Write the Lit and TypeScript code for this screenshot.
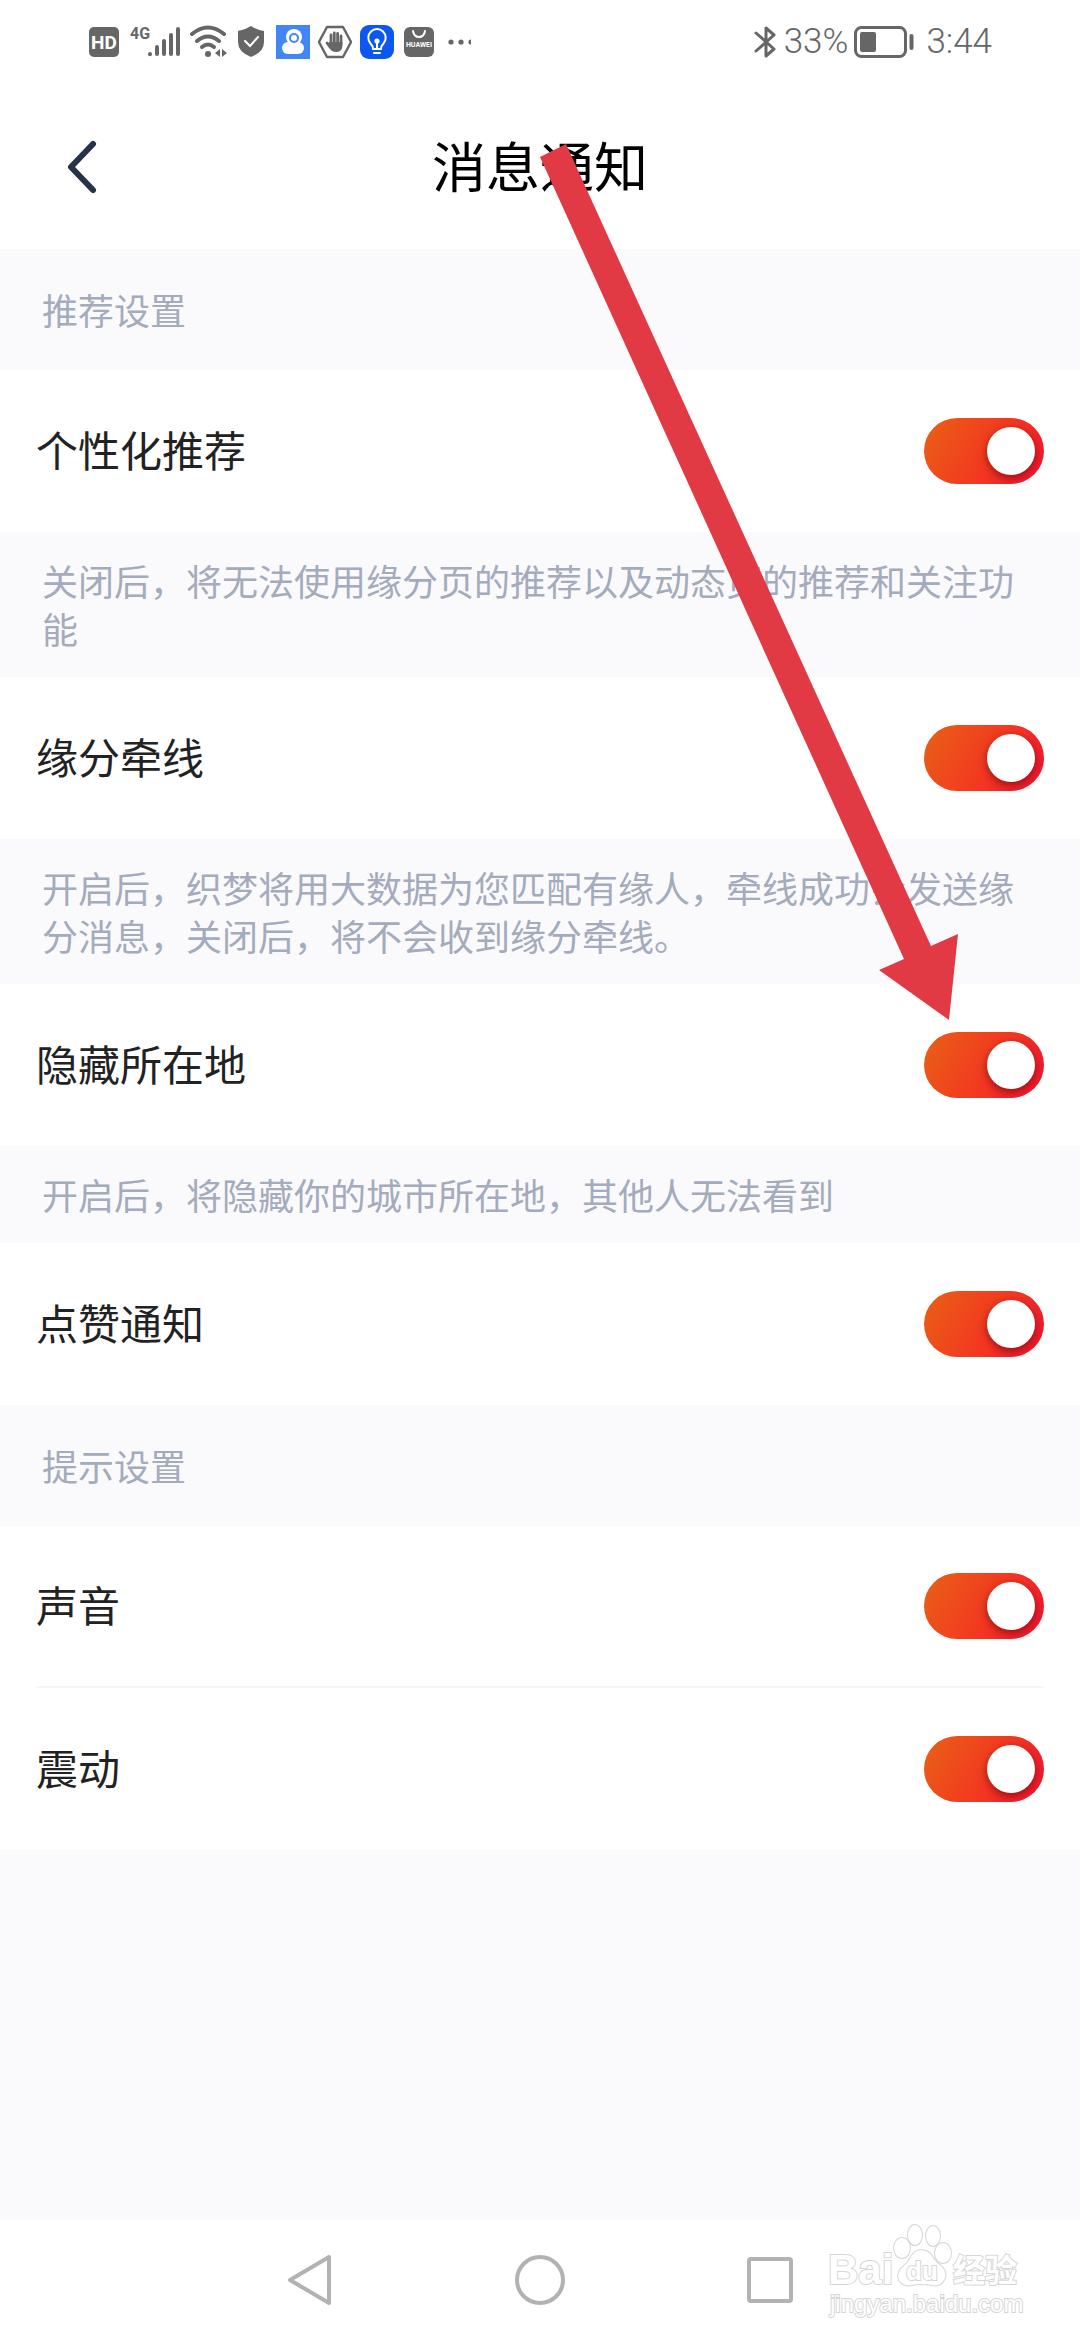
import { LitElement, html, css, svg } from "lit";
import { customElement, property, state } from "lit/decorators.js";

interface Setting {
  id: string;
  label: string;
  note?: string;
}

interface Group {
  title: string;
  items: Setting[];
}

const GROUPS: Group[] = [
  {
    title: "推荐设置",
    items: [
      { id: "personal", label: "个性化推荐", note: "关闭后，将无法使用缘分页的推荐以及动态页的推荐和关注功能" },
      { id: "match", label: "缘分牵线", note: "开启后，织梦将用大数据为您匹配有缘人，牵线成功会发送缘分消息，关闭后，将不会收到缘分牵线。" },
      { id: "location", label: "隐藏所在地", note: "开启后，将隐藏你的城市所在地，其他人无法看到" },
      { id: "likes", label: "点赞通知" },
    ],
  },
  {
    title: "提示设置",
    items: [
      { id: "sound", label: "声音" },
      { id: "vibrate", label: "震动" },
    ],
  },
];

@customElement("status-bar")
export class StatusBar extends LitElement {
  static styles = css`
    :host {
      display: block;
      background: #fff;
      color: #666;
    }
    .bar {
      display: flex;
      align-items: center;
      justify-content: space-between;
      height: 84px;
      box-sizing: border-box;
      padding: 0 88px;
      font: 300 35px/40px Roboto, "Noto Sans", sans-serif;
    }
    .icons {
      display: flex;
      align-items: center;
      gap: 8px;
    }
    .status {
      display: flex;
      align-items: center;
      gap: 6px;
    }
    svg {
      display: block;
      flex: none;
    }
    .glyph {
      font-family: Roboto, "Liberation Sans", sans-serif;
      font-weight: 700;
    }
  `;

  render() {
    return html`
      <div class="bar">
        <div class="icons">
          <svg width="34" height="36" viewBox="0 0 34 36" aria-hidden="true">
            <rect x="1" y="3" width="30" height="30" rx="5" fill="#666" />
            <text class="glyph" x="16" y="25" font-size="19" text-anchor="middle" fill="#fff">HD</text>
          </svg>
          <svg width="52" height="36" viewBox="0 0 52 36" aria-hidden="true">
            <text class="glyph" x="0" y="15" font-size="16" fill="#666">4G</text>
            <g stroke="#666" stroke-width="4" stroke-linecap="round">
              <path d="M20 30V30.2M27 23V30M34 17V30M41 11V30M48 5V30" />
            </g>
          </svg>
          <svg width="38" height="36" viewBox="0 0 38 36" aria-hidden="true">
            <g fill="none" stroke="#666" stroke-width="4" stroke-linecap="round">
              <path d="M2 10Q18-3 34 10" />
              <path d="M7 17Q18 8 29 17" />
              <path d="M12 23Q18 18 24 23" />
            </g>
            <circle cx="18" cy="30" r="3" fill="#666" />
            <path d="M30 25V33L25 29ZM32 25V33L37 29Z" fill="#666" />
          </svg>
          <svg width="32" height="36" viewBox="0 0 32 36" aria-hidden="true">
            <path d="M15 2Q21 6 28 7V18Q28 28 15 33Q2 28 2 18V7Q9 6 15 2Z" fill="#666" />
            <path d="M9 17L14 22L22 13" fill="none" stroke="#fff" stroke-width="2" stroke-linecap="round" />
          </svg>
          <svg width="34" height="36" viewBox="0 0 34 36" aria-hidden="true">
            <rect y="1" width="34" height="34" fill="#4285f4" />
            <circle cx="18" cy="13" r="8" fill="#fff" />
            <rect x="6" y="18" width="22" height="12" rx="6" fill="#fff" />
            <circle cx="18" cy="14" r="5" fill="#4285f4" />
            <circle cx="18" cy="14" r="3" fill="#fff" />
          </svg>
          <svg width="34" height="36" viewBox="0 0 34 36" aria-hidden="true">
            <path d="M9 3H25L33 18L25 33H9L1 18Z" fill="none" stroke="#666" stroke-width="2.4" stroke-linejoin="round" />
            <g stroke="#666" stroke-width="2.8" stroke-linecap="round">
              <path d="M13 20V11M16.3 20V9M19.6 20V9.5M23 20V12M12 23L9 19" />
            </g>
            <path d="M11.6 18H24.4V22Q24 28 18 28Q14 28 12 25L9 20Z" fill="#666" />
          </svg>
          <svg width="34" height="36" viewBox="0 0 34 36" aria-hidden="true">
            <rect y="1" width="34" height="34" rx="9" fill="#0b57f0" />
            <g fill="none" stroke="#fff" stroke-width="2" stroke-linecap="round">
              <path d="M13 25Q13 22 10.5 19.5A8.7 8.7 0 1 1 23.5 19.5Q21 22 21 25ZM14 29H20M17 18V25" />
            </g>
            <circle cx="17" cy="17" r="2.6" fill="#fff" />
          </svg>
          <svg width="34" height="36" viewBox="0 0 34 36" aria-hidden="true">
            <rect x="2" y="3" width="30" height="30" rx="6" fill="#666" />
            <path d="M11 7Q12 13 17 13Q22 13 23 7" fill="none" stroke="#fff" stroke-width="2" stroke-linecap="round" />
            <text class="glyph" x="17" y="23" font-size="7" text-anchor="middle" fill="#fff">HUAWEI</text>
          </svg>
          <svg width="32" height="36" viewBox="0 0 32 36" aria-hidden="true">
            <g fill="#666">
              <circle cx="7" cy="18" r="2.6" />
              <circle cx="17" cy="18" r="2.6" />
              <path d="M27 15.4V20.6A2.6 2.6 0 0 1 27 15.4Z" />
            </g>
          </svg>
        </div>
        <div class="status">
          <svg width="24" height="36" viewBox="0 0 24 36" aria-hidden="true">
            <path d="M2 9L20 25L12 32V4L20 11L2 27" fill="none" stroke="#666" stroke-width="3" stroke-linecap="round" stroke-linejoin="round" />
          </svg>
          <span>33%</span>
          <svg width="66" height="36" viewBox="0 0 66 36" aria-hidden="true">
            <rect x="1.5" y="3.5" width="50" height="29" rx="6" fill="none" stroke="#666" stroke-width="3" />
            <rect x="6" y="8" width="16" height="20" rx="2" fill="#666" />
            <path d="M57.5 12V24" stroke="#666" stroke-width="4" stroke-linecap="round" />
          </svg>
          <span>3:44</span>
        </div>
      </div>
    `;
  }
}

@customElement("setting-row")
export class SettingRow extends LitElement {
  @property() label = "";
  @property({ type: Boolean }) divided = false;
  @state() private on = true;

  static styles = css`
    :host {
      display: block;
      background: #fff;
      padding: 0 36px;
    }
    .row {
      display: flex;
      align-items: center;
      justify-content: space-between;
      height: 162px;
      box-sizing: border-box;
      color: #222;
      font-size: 42px;
      line-height: 60px;
    }
    .row label {
      padding-bottom: 4px;
    }
    .divided {
      border-bottom: 2px solid #f5f5f5;
    }
    .switch {
      appearance: none;
      display: flex;
      flex: none;
      width: 120px;
      height: 66px;
      margin: 0;
      padding: 9px;
      box-sizing: border-box;
      border-radius: 33px;
      background: #d5d7de;
    }
    .switch::before {
      content: "";
      width: 48px;
      height: 48px;
      border-radius: 50%;
      background: #fff;
      box-shadow: 0 3px 8px rgba(90, 0, 0, 0.6);
    }
    .switch:checked {
      justify-content: flex-end;
      background: linear-gradient(120deg, #ea5a17 10%, #f43522 60%, #f01a2e 90%);
    }
  `;

  private toggle(e: Event) {
    this.on = (e.target as HTMLInputElement).checked;
  }

  render() {
    return html`
      <div class="row ${this.divided ? "divided" : ""}">
        <label for="switch">${this.label}</label>
        <input id="switch" class="switch" type="checkbox" role="switch" .checked=${this.on} @change=${this.toggle} />
      </div>
    `;
  }
}

@customElement("nav-bar")
export class NavBar extends LitElement {
  static styles = css`
    :host {
      display: block;
      position: relative;
      background: #fff;
    }
    .nav {
      display: flex;
      height: 120px;
      padding: 0 18%;
    }
    .key {
      flex: 1;
      display: flex;
      align-items: center;
      justify-content: center;
      padding: 0;
      border: 0;
      background: none;
    }
    .mark {
      position: absolute;
      right: 54px;
      bottom: 16px;
      display: block;
    }
    .brand {
      font-family: "Liberation Sans", Arial, sans-serif;
      font-weight: 700;
    }
    .brand-cjk {
      font-family: "Noto Sans CJK SC", sans-serif;
      font-weight: 700;
    }
    .site {
      font-family: "Liberation Sans", Arial, sans-serif;
    }
  `;

  render() {
    return html`
      <nav class="nav">
        <button class="key" aria-label="返回">
          <svg width="52" height="52" viewBox="0 0 52 52" fill="none" stroke="#b2b2b2" stroke-width="4" stroke-linejoin="round">
            <path d="M45 3V49L6 26Z" />
          </svg>
        </button>
        <button class="key" aria-label="主页">
          <svg width="52" height="52" viewBox="0 0 52 52" fill="none" stroke="#b2b2b2" stroke-width="4">
            <circle cx="26" cy="26" r="23" />
          </svg>
        </button>
        <button class="key" aria-label="最近任务">
          <svg width="52" height="52" viewBox="0 0 52 52" fill="none" stroke="#b2b2b2" stroke-width="4">
            <rect x="5" y="5" width="42" height="42" rx="2" />
          </svg>
        </button>
      </nav>
      <svg class="mark" width="200" height="102" viewBox="0 0 200 102" fill="#fff" stroke="#d6d6d6" stroke-width="2" paint-order="stroke">
        <text class="brand" x="2" y="62" font-size="42">Bai</text>
        <ellipse cx="76" cy="26" rx="8" ry="10" />
        <ellipse cx="89" cy="13" rx="7" ry="10" />
        <ellipse cx="107" cy="14" rx="7" ry="10" />
        <ellipse cx="117" cy="31" rx="8" ry="10" />
        <path d="M95 28Q102 28 106 34Q109 40 115 44Q122 51 118 58Q114 65 106 63Q96 61 86 63Q77 65 73 58Q70 50 78 44Q82 41 85 35Q89 28 95 28Z" />
        <text class="brand" x="80" y="58" font-size="26">du</text>
        <text class="brand-cjk" x="127" y="60" font-size="32">经验</text>
        <text class="site" x="4" y="90" font-size="24">jingyan.baidu.com</text>
      </svg>
    `;
  }
}

const pointer = svg`<path d="M0 13L26 0L391 802L418 790L409 876L339 826L364 815Z" />`;

@customElement("app-root")
export class AppRoot extends LitElement {
  static styles = css`
    :host {
      display: flex;
      flex-direction: column;
      position: relative;
      min-height: 100vh;
      background: #fafafc;
      font-family: "Noto Sans CJK SC", sans-serif;
    }
    .header {
      display: grid;
      grid-template-columns: 1fr auto 1fr;
      align-items: center;
      height: 165px;
      background: #fff;
    }
    .back {
      justify-self: start;
      display: flex;
      padding: 20px 48px 20px 63px;
      border: 0;
      background: none;
    }
    .title {
      margin: 0;
      padding-bottom: 4px;
      color: #000;
      font-size: 54px;
      font-weight: 400;
      line-height: 72px;
    }
    .section {
      margin: 0;
      padding: 36px 42px 37px;
      color: #a4abbd;
      font-size: 36px;
      font-weight: 400;
      line-height: 48px;
    }
    .note {
      margin: 0;
      padding: 24px 42px 25px;
      color: #a4abbd;
      font-size: 36px;
      line-height: 48px;
    }
    .content {
      flex: 1;
    }
    .pointer {
      position: absolute;
      left: 50%;
      top: 144px;
      fill: #e23a44;
      pointer-events: none;
    }
  `;

  render() {
    return html`
      <status-bar></status-bar>
      <header class="header">
        <button class="back" aria-label="返回">
          <svg width="36" height="58" viewBox="0 0 36 58" fill="none" stroke="#263248" stroke-width="6" stroke-linecap="round" stroke-linejoin="round">
            <path d="M30 6L8 29L30 52" />
          </svg>
        </button>
        <h1 class="title">消息通知</h1>
      </header>
      <main class="content">
        ${GROUPS.map(
          (group, g) => html`
            <section>
              <h2 class="section">${group.title}</h2>
              ${group.items.map(
                (item, i) => html`
                  <setting-row
                    .label=${item.label}
                    ?divided=${g === 1 && i < group.items.length - 1}
                  ></setting-row>
                  ${item.note ? html`<p class="note">${item.note}</p>` : null}
                `
              )}
            </section>
          `
        )}
      </main>
      <nav-bar></nav-bar>
      <svg class="pointer" width="420" height="880" viewBox="0 0 420 880" aria-hidden="true">${pointer}</svg>
    `;
  }
}
